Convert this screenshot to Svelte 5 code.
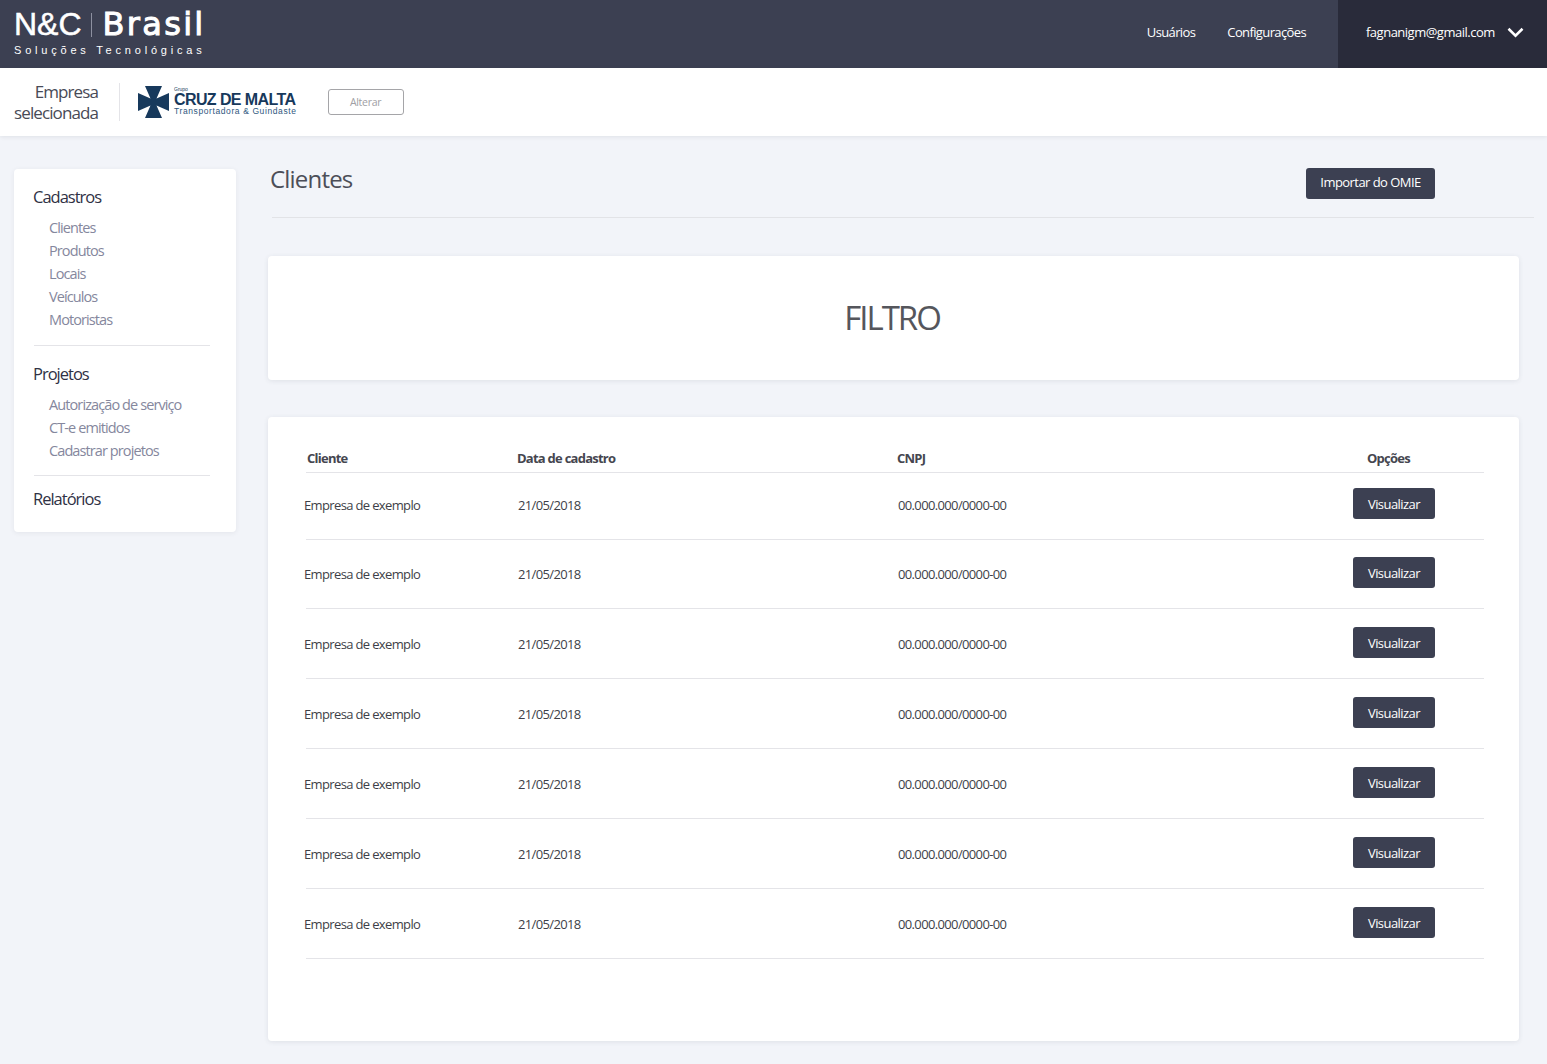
<script lang="ts">
  const menu = [
    { title: 'Cadastros', items: ['Clientes', 'Produtos', 'Locais', 'Veículos', 'Motoristas'] },
    { title: 'Projetos', items: ['Autorização de serviço', 'CT-e emitidos', 'Cadastrar projetos'] },
    { title: 'Relatórios', items: [] as string[] },
  ];

  // row heights differ by a pixel or two in the reference
  const rows = [67, 69, 70, 70, 70, 70, 70].map((height) => ({
    height,
    client: 'Empresa de exemplo',
    date: '21/05/2018',
    cnpj: '00.000.000/0000-00',
  }));
</script>

<header class="topbar">
  <div class="brand">
    <div class="brand-name"><span>N&amp;C</span><i></i><span class="brasil">Brasil</span></div>
    <div class="brand-sub">Soluções Tecnológicas</div>
  </div>
  <nav class="topnav">
    <span>Usuários</span>
    <span>Configurações</span>
  </nav>
  <div class="account">
    <span>fagnanigm@gmail.com</span>
    <svg width="17" height="11" viewBox="0 0 17 11" aria-hidden="true">
      <path d="M1.500 1.800 8.500 8.600 15.500 1.800" fill="none" stroke="#fff" stroke-width="2.600" />
    </svg>
  </div>
</header>

<div class="company">
  <div class="company-label">Empresa<br />selecionada</div>
  <div class="company-logo">
    <svg width="31" height="32" viewBox="0 0 31 32" aria-hidden="true">
      <path
        fill="#17395c"
        d="M7 0H24L18.500 12.500 31 7V25L18.500 19.500 24 32H7L12.500 19.500 0 25V7L12.500 12.500Z"
      />
    </svg>
    <div class="logo-text">
      <small>Grupo</small>
      <strong>CRUZ DE MALTA</strong>
      <em>Transportadora &amp; Guindaste</em>
    </div>
  </div>
  <button class="change">Alterar</button>
</div>

<div class="page">
  <aside class="sidebar">
    {#each menu as group, i}
      {#if i > 0}<hr />{/if}
      <h3>{group.title}</h3>
      {#if group.items.length}
        <ul>
          {#each group.items as item}
            <li>{item}</li>
          {/each}
        </ul>
      {/if}
    {/each}
  </aside>

  <main class="content">
    <div class="title-row">
      <h1>Clientes</h1>
      <button class="btn import">Importar do OMIE</button>
    </div>

    <section class="card filter">FILTRO</section>

    <section class="card list">
      <div class="row head">
        <span class="c-client">Cliente</span>
        <span class="c-date">Data de cadastro</span>
        <span class="c-cnpj">CNPJ</span>
        <span class="c-opts">Opções</span>
      </div>
      {#each rows as row}
        <div class="row" style="height: {row.height}px; padding-bottom: {70 - row.height}px">
          <span class="cell-client">{row.client}</span>
          <span>{row.date}</span>
          <span>{row.cnpj}</span>
          <span class="cell-btn"><button class="btn">Visualizar</button></span>
        </div>
      {/each}
    </section>
  </main>
</div>

<style>
  :global(body) {
    margin: 0;
    background: #f2f4f9;
    font-family: 'Open Sans', 'Noto Sans', sans-serif;
    color: #3c3e50;
  }

  button {
    font-family: inherit;
    cursor: pointer;
  }

  .topbar {
    height: 68px;
    background: #3c4052;
    display: flex;
    align-items: stretch;
    color: #fff;
  }

  .brand {
    margin-left: 14px;
    flex: 1;
    padding-top: 8px;
  }

  .brand-name {
    display: flex;
    align-items: center;
    font-family: 'Liberation Sans', sans-serif;
    font-size: 32px;
    line-height: 33px;
    -webkit-text-stroke: 0.5px #fff;
  }

  .brand-name i {
    width: 1px;
    height: 24px;
    background: #8d90a0;
    margin: 0 11px 0 9px;
  }

  .brasil {
    font-family: 'DejaVu Sans', sans-serif;
    font-size: 32px;
    letter-spacing: 2.300px;
    -webkit-text-stroke: 1px #fff;
  }

  .brand-sub {
    font-family: 'Liberation Sans', sans-serif;
    font-size: 11px;
    line-height: 12px;
    letter-spacing: 3.800px;
    margin-top: 3px;
    white-space: nowrap;
  }

  .topnav {
    display: flex;
    align-items: center;
    gap: 32px;
    font-size: 13px;
    letter-spacing: -0.620px;
    margin-right: 32px;
    padding-bottom: 4px;
  }

  .account {
    width: 209px;
    box-sizing: border-box;
    background: #292b3a;
    display: flex;
    align-items: center;
    padding: 0 23px 4px 28px;
    justify-content: space-between;
    font-size: 13px;
    letter-spacing: -0.500px;
  }

  .company {
    height: 68px;
    background: #fff;
    box-shadow: 0 1px 4px rgba(60, 64, 82, 0.1);
    display: flex;
    align-items: center;
    position: relative;
  }

  .company-label {
    width: 98px;
    text-align: right;
    font-size: 17px;
    line-height: 21px;
    letter-spacing: -0.900px;
    color: #484a56;
  }

  .company-logo {
    margin-left: 21px;
    height: 38px;
    border-left: 1px solid #e4e4e8;
    padding-left: 18px;
    display: flex;
    align-items: center;
    gap: 5px;
  }

  .logo-text {
    display: flex;
    flex-direction: column;
    font-family: 'Liberation Sans', sans-serif;
    color: #17395c;
    white-space: nowrap;
    margin-top: -1px;
  }

  .logo-text small {
    font-size: 5px;
    line-height: 5px;
  }

  .logo-text strong {
    font-size: 16px;
    line-height: 15px;
    letter-spacing: -0.600px;
  }

  .logo-text em {
    font-style: normal;
    font-size: 8.500px;
    line-height: 10px;
    letter-spacing: 0.600px;
    color: #2f5780;
    margin-top: -1px;
  }

  .change {
    margin-left: 31px;
    width: 76px;
    height: 26px;
    background: #fff;
    border: 1px solid #a5a5a8;
    border-radius: 3px;
    color: #a0a0a4;
    font-size: 10.500px;
    letter-spacing: -0.300px;
    padding: 0;
  }

  .page {
    display: flex;
    align-items: flex-start;
    padding: 33px 13px 23px 14px;
  }

  .sidebar {
    width: 222px;
    height: 363px;
    box-sizing: border-box;
    background: #fff;
    border-radius: 4px;
    box-shadow: 0 1px 5px rgba(60, 64, 82, 0.08);
    padding: 17px 26px 0 20px;
    flex-shrink: 0;
  }

  .sidebar h3 {
    margin: 0 0 0 -1px;
    font-size: 16.500px;
    font-weight: 400;
    line-height: 22px;
    letter-spacing: -1px;
    color: #2f3144;
  }

  .sidebar ul {
    list-style: none;
    margin: 8px 0 0;
    padding: 0 0 0 15px;
  }

  .sidebar li {
    font-size: 14.500px;
    line-height: 23px;
    letter-spacing: -0.900px;
    color: #85879d;
  }

  .sidebar hr {
    border: 0;
    border-top: 1px solid #e4e4e8;
    margin: 14px 0 17px;
  }

  .sidebar hr:last-of-type {
    margin: 13px 0 12px;
  }

  .content {
    flex: 1;
    min-width: 0;
    margin-left: 32px;
  }

  .title-row {
    margin-left: 4px;
    height: 49px;
    border-bottom: 1px solid #e2e3e7;
    display: flex;
    align-items: flex-start;
    justify-content: space-between;
    padding-right: 99px;
    margin-top: -1px;
  }

  h1 {
    margin: -1px 0 0 -2px;
    font-size: 24px;
    font-weight: 400;
    line-height: 24px;
    letter-spacing: -0.800px;
    color: #4c4e58;
  }

  .btn {
    background: #3c4052;
    color: #fff;
    border: 0;
    border-radius: 3px;
    height: 31px;
    width: 82px;
    padding: 1px 0 0;
    font-size: 13px;
    letter-spacing: -0.550px;
  }

  .import {
    width: 129px;
    padding: 0 0 3px;
  }

  .card {
    width: 1251px;
    background: #fff;
    border-radius: 4px;
    box-shadow: 0 1px 5px rgba(60, 64, 82, 0.1);
  }

  .filter {
    margin-top: 38px;
    height: 124px;
    display: flex;
    align-items: center;
    justify-content: center;
    font-size: 33px;
    letter-spacing: -2px;
    color: #55565c;
    padding: 0 3px 2px 0;
    box-sizing: border-box;
  }

  .list {
    margin-top: 37px;
    height: 624px;
    box-sizing: border-box;
    padding: 24px 35px 0 38px;
  }

  .row {
    display: grid;
    grid-template-columns: 212px 380px 1fr 131px;
    align-items: center;
    border-bottom: 1px solid #e4e4e8;
    box-sizing: border-box;
    font-size: 13px;
    letter-spacing: -0.640px;
    color: #3e3f48;
  }

  .head {
    height: 32px;
    padding-top: 2px;
    font-weight: 700;
    font-size: 13px;
    letter-spacing: -0.750px;
    color: #45464f;
  }

  .c-client {
    margin-left: 1px;
  }

  .c-date,
  .c-cnpj {
    margin-left: -1px;
  }

  .c-opts {
    text-align: center;
    width: 131px;
    margin-left: -30px;
  }

  .cell-client {
    margin-left: -2px;
  }

  .cell-btn {
    display: flex;
    padding-bottom: 2px;
  }
</style>
